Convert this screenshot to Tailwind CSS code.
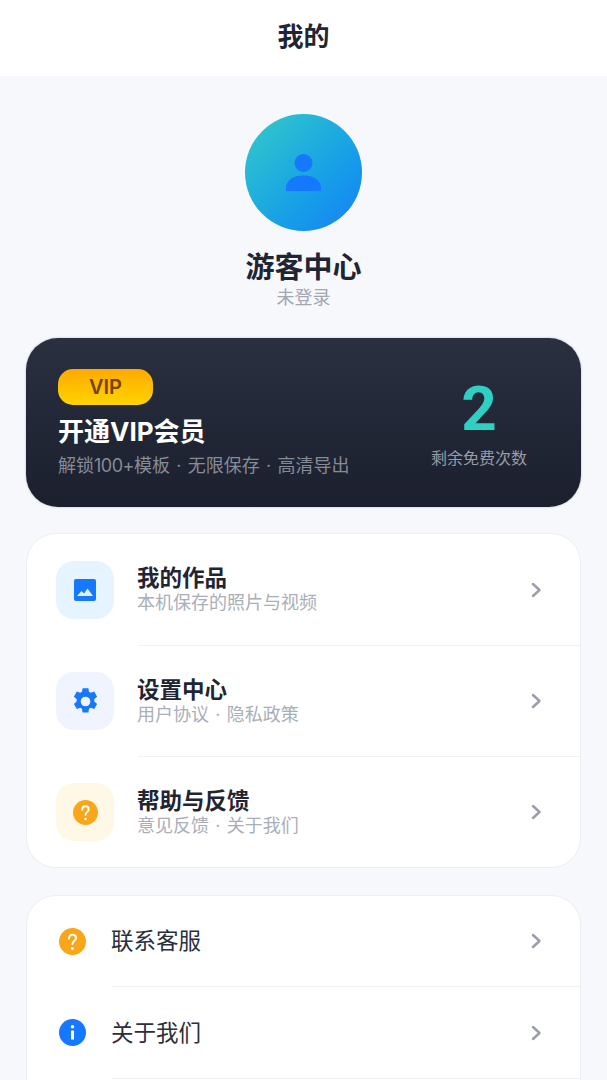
<!DOCTYPE html>
<html lang="zh-CN">
  <head>
    <meta charset="UTF-8" />
    <meta name="viewport" content="width=device-width, initial-scale=1.0" />
    <script src="https://cdn.jsdelivr.net/npm/@tailwindcss/browser@4"></script>
    <title>我的</title>
  </head>
  <body class="bg-[#f6f8fc]">
    <div class="h-[1080px] w-[607px] overflow-hidden bg-[#f6f8fc] font-['Inter','Noto_Sans_CJK_SC',sans-serif]">
      <!-- header -->
      <div class="flex h-[76px] items-center justify-center bg-white pb-[2px]">
        <span class="text-[26px] leading-none font-bold text-[#1f2533]">我的</span>
      </div>

      <!-- profile -->
      <div class="flex flex-col items-center pt-[38px]">
        <div class="flex h-[117px] w-[117px] items-center justify-center rounded-full bg-gradient-to-br from-[#36cbc6] to-[#1a7ff8]">
          <svg class="h-[39px] w-[39px]" viewBox="0 0 39 39" fill="#1677ff">
            <circle cx="19.5" cy="10" r="9" />
            <path d="M2 38v-3c0-8 8-12.500 17.500-12.500S37 27 37 35v3z" />
          </svg>
        </div>
        <div class="mt-[21px] text-[29px] leading-[32px] font-bold text-[#1f2533]">游客中心</div>
        <div class="mt-[1px] text-[18px] leading-[26px] text-[#a2a7b3]">未登录</div>
      </div>

      <!-- vip card -->
      <div class="mx-[26px] mt-[27px] flex h-[169px] items-start justify-between rounded-[32px] bg-gradient-to-b from-[#2a3040] to-[#1b1f2e] pt-[31px] pr-[54px] pl-[32px] shadow-[0_0_2px_rgba(30,40,60,0.35)]">
        <div>
          <div class="flex h-[36px] w-[95px] items-center justify-center rounded-[15px] bg-gradient-to-b from-[#ffa800] to-[#ffd500] text-[20px] font-semibold text-[#744300]">VIP</div>
          <div class="mt-[9px] text-[26px] leading-[36px] font-bold text-white">开通VIP会员</div>
          <div class="mt-[3px] text-[18px] leading-[26px] whitespace-nowrap text-[#868b98] [word-spacing:1.25px]">解锁<span class="tracking-[-0.5px]">100+</span>模板 · 无限保存 · 高清导出</div>
        </div>
        <div class="mt-[5px] flex flex-col items-center">
          <div class="font-['Roboto',sans-serif] text-[62px] leading-[70px] font-bold text-[#2fd0c4]">2</div>
          <div class="mt-[2px] text-[16px] leading-[24px] text-[#969ba7]">剩余免费次数</div>
        </div>
      </div>

      <!-- main menu -->
      <div class="mx-[26px] mt-[26px] rounded-[30px] border border-[#eceef4] bg-white">
        <div class="flex h-[111px] items-center pr-[38px] pl-[29px]">
          <div class="flex h-[58px] w-[58px] shrink-0 items-center justify-center rounded-[18px] bg-[#e6f4ff]">
            <svg class="h-[22px] w-[22px]" viewBox="0 0 22 22">
              <rect width="22" height="22" rx="2" fill="#1677ff" />
              <path d="M3 17l4.500-5 2.500 2.500 3.500-5L19 17z" fill="#dff0ff" />
            </svg>
          </div>
          <div class="ml-[23px] flex-1">
            <div class="text-[22.500px] leading-[27px] font-bold text-[#1f2533]">我的作品</div>
            <div class="text-[18px] leading-[24px] text-[#a9aeb8]">本机保存的照片与视频</div>
          </div>
          <svg class="h-[16px] w-[11px]" viewBox="0 0 11 16" fill="none" stroke="#9a9fab" stroke-width="2.500" stroke-linecap="round" stroke-linejoin="round"><path d="M2 2l6.500 6L2 14" /></svg>
        </div>
        <div class="ml-[111px] h-px bg-[#f1f2f6]"></div>
        <div class="flex h-[110px] items-center pr-[38px] pl-[29px]">
          <div class="flex h-[58px] w-[58px] shrink-0 items-center justify-center rounded-[18px] bg-[#f0f4ff]">
            <svg class="h-[29px] w-[29px]" viewBox="0 0 24 24" fill="#1677ff">
              <path fill-rule="evenodd" d="M14.400 1l.5 2.900 1.500.9 2.800-1 2.400 4.200-2.300 1.900v2.200l2.300 1.900-2.400 4.200-2.800-1-1.500.9-.5 2.900H9.600l-.5-2.900-1.500-.9-2.800 1-2.400-4.200 2.300-1.900V9.900L2.400 8l2.400-4.200 2.800 1 1.500-.9L9.600 1zM12 8a4 4 0 1 0 0 8 4 4 0 0 0 0-8z" />
            </svg>
          </div>
          <div class="ml-[23px] flex-1">
            <div class="text-[22.500px] leading-[27px] font-bold text-[#1f2533]">设置中心</div>
            <div class="text-[18px] leading-[24px] text-[#a9aeb8] [word-spacing:1.25px]">用户协议 · 隐私政策</div>
          </div>
          <svg class="h-[16px] w-[11px]" viewBox="0 0 11 16" fill="none" stroke="#9a9fab" stroke-width="2.500" stroke-linecap="round" stroke-linejoin="round"><path d="M2 2l6.500 6L2 14" /></svg>
        </div>
        <div class="ml-[111px] h-px bg-[#f1f2f6]"></div>
        <div class="flex h-[110px] items-center pr-[38px] pl-[29px]">
          <div class="flex h-[58px] w-[58px] shrink-0 items-center justify-center rounded-[18px] bg-[#fff8e6]">
            <svg class="h-[25px] w-[25px]" viewBox="0 0 27 27">
              <circle cx="13.500" cy="13.500" r="13.500" fill="#faa61a" />
              <path d="M10 10.500c0-2.200 1.500-3.800 3.500-3.800s3.500 1.400 3.500 3.400c0 2.700-3.500 2.900-3.500 6" fill="none" stroke="#fff" stroke-width="2" stroke-linecap="round" />
              <circle cx="13.500" cy="20.500" r="1.400" fill="#fff" />
            </svg>
          </div>
          <div class="ml-[23px] flex-1">
            <div class="text-[22.500px] leading-[27px] font-bold text-[#1f2533]">帮助与反馈</div>
            <div class="text-[18px] leading-[24px] text-[#a9aeb8] [word-spacing:1.25px]">意见反馈 · 关于我们</div>
          </div>
          <svg class="h-[16px] w-[11px]" viewBox="0 0 11 16" fill="none" stroke="#9a9fab" stroke-width="2.500" stroke-linecap="round" stroke-linejoin="round"><path d="M2 2l6.500 6L2 14" /></svg>
        </div>
      </div>

      <!-- second menu, runs past the bottom of the screen -->
      <div class="mx-[26px] mt-[27px] rounded-[30px] border border-[#eceef4] bg-white">
        <div class="flex h-[90px] items-center pr-[38px] pl-[32px]">
          <svg class="h-[27px] w-[27px] shrink-0" viewBox="0 0 27 27">
            <circle cx="13.500" cy="13.500" r="13.500" fill="#faa61a" />
            <path d="M10 10.500c0-2.200 1.500-3.800 3.500-3.800s3.500 1.400 3.500 3.400c0 2.700-3.500 2.900-3.500 6" fill="none" stroke="#fff" stroke-width="2" stroke-linecap="round" />
            <circle cx="13.500" cy="20.500" r="1.400" fill="#fff" />
          </svg>
          <div class="ml-[25px] flex-1 text-[22.500px] leading-[30px] text-[#2a2f3c]">联系客服</div>
          <svg class="h-[16px] w-[11px]" viewBox="0 0 11 16" fill="none" stroke="#9a9fab" stroke-width="2.500" stroke-linecap="round" stroke-linejoin="round"><path d="M2 2l6.500 6L2 14" /></svg>
        </div>
        <div class="ml-[85px] h-px bg-[#f1f2f6]"></div>
        <div class="flex h-[91px] items-center pr-[38px] pl-[32px]">
          <svg class="h-[27px] w-[27px] shrink-0" viewBox="0 0 27 27">
            <circle cx="13.500" cy="13.500" r="13.500" fill="#1677ff" />
            <rect x="12" y="11.500" width="3" height="9" rx="0.500" fill="#fff" />
            <circle cx="13.500" cy="7.800" r="1.800" fill="#fff" />
          </svg>
          <div class="ml-[25px] flex-1 text-[22.500px] leading-[30px] text-[#2a2f3c]">关于我们</div>
          <svg class="h-[16px] w-[11px]" viewBox="0 0 11 16" fill="none" stroke="#9a9fab" stroke-width="2.500" stroke-linecap="round" stroke-linejoin="round"><path d="M2 2l6.500 6L2 14" /></svg>
        </div>
        <div class="ml-[85px] h-px bg-[#f1f2f6]"></div>
        <div class="h-[91px]"></div>
      </div>
    </div>
  </body>
</html>
